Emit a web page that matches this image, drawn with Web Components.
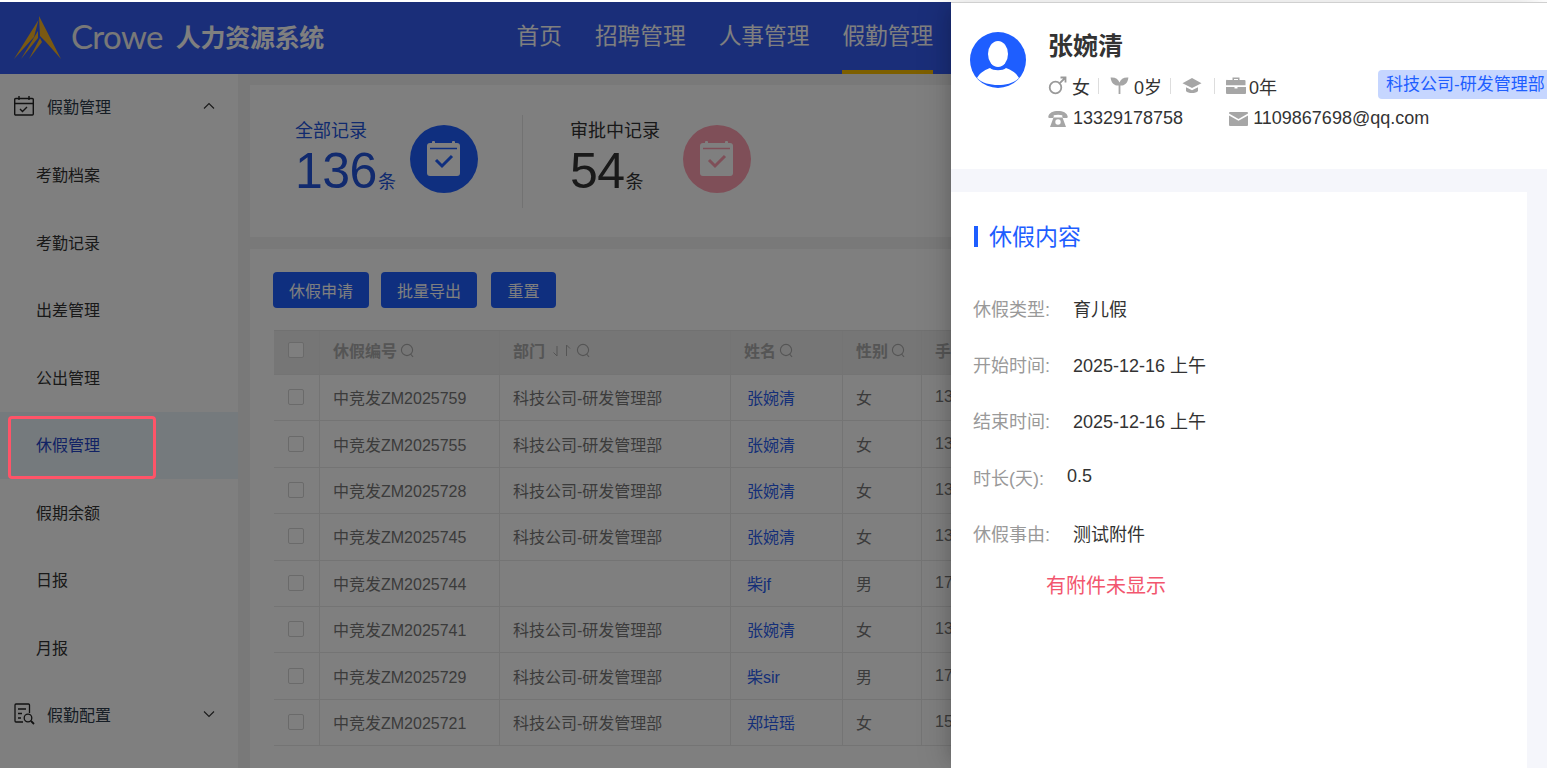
<!doctype html>
<html lang="zh">
<head>
<meta charset="utf-8">
<title>人力资源系统</title>
<style>
  html, body { margin: 0; height: 100%; overflow: hidden; background: #fff; }
  body { font-family: 'Liberation Sans', 'Noto Sans CJK SC', sans-serif; color: #333; }
</style>
</head>
<body>
<hr-app></hr-app>
<script>
const BLUE = '#1e5eff'

const icons = {
  calendar: `<svg width="22" height="22" viewBox="0 0 22 22" fill="none" stroke="currentColor" stroke-width="1.4"><rect x=".7" y="3.500" width="18.600" height="16.500" rx="1"/><path d="M.7 8.500h18.600M5 1v4M15 1v4"/><path d="M6 14l2.500 2.500 4.500-4.500"/></svg>`,
  docSearch: `<svg width="24" height="22" viewBox="0 0 24 22" fill="none" stroke="currentColor" stroke-width="1.3"><path d="M15.500 10V2a1 1 0 0 0-1-1H2a1 1 0 0 0-1 1v16a1 1 0 0 0 1 1h7"/><path d="M4 6h8M4 10.500h4M4 15h3"/><circle cx="14" cy="15" r="3.800"/><path d="M17 18l3 3" stroke-width="1.800"/></svg>`,
  up: `<svg width="12" height="8" viewBox="0 0 12 8" fill="none" stroke="currentColor" stroke-width="1.100"><path d="M1 6.500l5-5 5 5"/></svg>`,
  down: `<svg width="12" height="8" viewBox="0 0 12 8" fill="none" stroke="currentColor" stroke-width="1.100"><path d="M1 1.500l5 5 5-5"/></svg>`,
  search: `<svg class="q" width="15" height="15" viewBox="0 0 15 15" fill="none" stroke="currentColor" stroke-width="1.100"><circle cx="7" cy="7" r="5.600"/><path d="M10.500 11l2.500 2.800"/></svg>`,
  sort: `<svg class="s" width="22" height="15" viewBox="0 0 22 15" fill="none" stroke="currentColor" stroke-width="1"><path d="M7 3v10L3.500 9.500M16.500 13V2L20 5.500"/></svg>`,
  male: `<svg width="19" height="19" viewBox="0 0 19 19" fill="none" stroke="#999" stroke-width="1.800"><circle cx="7.500" cy="11.500" r="5.800"/><path d="M11.800 7.200L17.500 1.500M12.500 1.500h5v5"/></svg>`,
  sprout: `<svg class="sprout" width="19" height="19" viewBox="0 0 19 19" fill="#a6a6a6"><path d="M8.600 18V9.500C5 9.700 1.200 8 .6 1.500 5 1 8.400 3 9.500 6.500 10.600 3 14 1 18.400 1.500 17.800 8 14 9.700 10.400 9.500V18z"/></svg>`,
  cap: `<svg class="cap" width="20" height="18" viewBox="0 0 20 18" fill="#a6a6a6"><path d="M10 1l9.500 5.200L10 11 .5 6.200z"/><path d="M4 10.200V14c2 2.700 10 2.700 12 0v-3.800L10 13.300z"/></svg>`,
  briefcase: `<svg class="case" width="20" height="19" viewBox="0 0 20 19" fill="#a6a6a6"><path d="M6.500 4V1.500h7V4h-1.500V3h-4v1z"/><path d="M1.500 4h17a1 1 0 0 1 1 1v4.300H0V5a1 1 0 0 1 1.500-1zM0 11h8.500v1.500h3V11H20v6a1 1 0 0 1-1 1H1a1 1 0 0 1-1-1z"/></svg>`,
  phone: `<svg width="20" height="18" viewBox="0 0 20 18" fill="#a6a6a6"><path d="M.3 6.500C1 2.800 5 1 10 1s9 1.800 9.700 5.500c.1 1-.5 1.500-1.300 1.500h-2.800c-.8 0-1.300-.5-1.300-1.300V5.300c-2.500-.7-6-.7-8.600 0v1.400c0 .8-.5 1.300-1.300 1.300H1.600C.8 8 .2 7.500.3 6.500z"/><path fill-rule="evenodd" d="M5.500 7.500h9L18 17H2zM10 9.300a2.700 2.700 0 1 0 0 5.400 2.700 2.700 0 0 0 0-5.400z"/></svg>`,
  mail: `<svg width="19" height="14" viewBox="0 0 19 15" preserveAspectRatio="none" fill="#a6a6a6"><path d="M1 0h17a1 1 0 0 1 1 1v.6l-9.500 5.800L0 1.600V1a1 1 0 0 1 1-1z"/><path d="M0 3.700l9.500 5.800L19 3.700V14a1 1 0 0 1-1 1H1a1 1 0 0 1-1-1z"/></svg>`,
}

// tiny helper so each element only declares its own styles and markup
const defineElement = (tag, html, setup) => {
  customElements.define(tag, class extends HTMLElement {
    connectedCallback() {
      if (this.shadowRoot) return
      const root = this.attachShadow({ mode: 'open' })
      root.innerHTML = typeof html === 'function' ? html(this) : html
      if (setup) setup(root, this)
    }
  })
}

defineElement('hr-header', `
  <style>
    :host { display: flex; align-items: stretch; height: 72px; margin-top: 2px; background: #345df2; color: #fff; }
    .logo { display: flex; align-items: center; width: 516.500px; padding: 0 0 4px 14px; box-sizing: border-box; flex: none; }
    .logo svg { margin-top: 4px; }
    .crowe { font: 400 33px Lato, sans-serif; letter-spacing: -.6px; margin-left: 9px; color: #f0f0f0; }
    .system { font-size: 25px; font-weight: 700; margin-left: 13px; letter-spacing: -.3px; color: #fff; }
    nav { display: flex; gap: 33px; }
    a { display: flex; align-items: center; font-size: 22.700px; height: 72px; box-sizing: border-box; border-bottom: 4px solid transparent; padding-bottom: 3px; color: #fff; white-space: nowrap; }
    a.on { border-bottom-color: #fabe00; }
  </style>
  <div class="logo">
    <svg width="48" height="44" viewBox="0 0 48 44"><g fill="#f5b325"><path d="M25 0L47 43 31.500 25.500 26 20z"/><path d="M24.500 4L0 43 20 21z"/><path d="M24 15L7 43 24 22z"/><path d="M26 22L15 43 28 26z"/></g></svg>
    <span class="crowe">Crowe</span><span class="system">人力资源系统</span>
  </div>
  <nav><a>首页</a><a>招聘管理</a><a>人事管理</a><a class="on">假勤管理</a></nav>
`)

defineElement('hr-menu-group', (el) => `
  <style>
    :host { display: flex; align-items: center; height: 67.500px; box-sizing: border-box; padding: 0 23px 3px 14px; font-size: 16px; color: #333; }
    .icon { width: 22px; height: 22px; margin-right: 11px; color: #222; }
    .label { flex: 1; color: #2d3a4a; }
    .chev { color: #333; display: flex; }
  </style>
  <span class="icon">${icons[el.getAttribute('icon')]}</span>
  <span class="label"><slot></slot></span>
  <span class="chev">${icons[el.getAttribute('chevron')]}</span>
`)

defineElement('hr-menu-item', `
  <style>
    :host { display: flex; align-items: center; height: 67.500px; box-sizing: border-box; padding: 0 0 2px 36px; font-size: 16px; color: #333; }
    :host([active]) { background: #ebf5fb; color: #2444c8; }
  </style>
  <slot></slot>
`)

defineElement('hr-side-menu', `
  <style>
    :host { display: block; width: 238px; flex: none; background: #fff; overflow: hidden; }
  </style>
  <hr-menu-group icon="calendar" chevron="up">假勤管理</hr-menu-group>
  <hr-menu-item>考勤档案</hr-menu-item>
  <hr-menu-item>考勤记录</hr-menu-item>
  <hr-menu-item>出差管理</hr-menu-item>
  <hr-menu-item>公出管理</hr-menu-item>
  <hr-menu-item active>休假管理</hr-menu-item>
  <hr-menu-item>假期余额</hr-menu-item>
  <hr-menu-item>日报</hr-menu-item>
  <hr-menu-item>月报</hr-menu-item>
  <hr-menu-group icon="docSearch" chevron="down">假勤配置</hr-menu-group>
`)

defineElement('hr-stat', (el) => `
  <style>
    :host { display: flex; align-items: center; color: ${el.getAttribute('color')}; }
    .text { display: flex; flex-direction: column; padding-bottom: 4px; }
    .title { font-size: 18px; line-height: 20px; margin-bottom: 4px; }
    .value { display: flex; align-items: baseline; height: 52px; line-height: 52px; font-size: 50px; letter-spacing: -.5px; }
    small { font-size: 18px; letter-spacing: 0; margin-left: 1px; }
    svg { flex: none; margin-left: ${el.getAttribute('gap')}px; margin-bottom: 4px; }
  </style>
  <div class="text">
    <span class="title">${el.getAttribute('title')}</span>
    <span class="value">${el.getAttribute('value')}<small>条</small></span>
  </div>
  <svg width="68" height="68" viewBox="0 0 68 68">
    <circle cx="34" cy="34" r="34" fill="${el.getAttribute('tone')}"/>
    <rect x="17" y="18" width="33" height="33" rx="3" fill="#fff"/>
    <rect x="22" y="16" width="3" height="4" rx="1" fill="#fff"/><rect x="42" y="16" width="3" height="4" rx="1" fill="#fff"/>
    <path d="M20 23.500h27" stroke="${el.getAttribute('tone')}" stroke-width="1.500"/>
    <path d="M26 35l6 6 10-10" fill="none" stroke="${el.getAttribute('tone')}" stroke-width="3"/>
  </svg>
`)

defineElement('hr-button', `
  <style>
    :host { display: inline-flex; align-items: center; justify-content: center; height: 36px; padding: 0 var(--pad, 16px); background: ${BLUE}; color: #fff; font-size: 16px; border-radius: 4px; }
  </style>
  <slot></slot>
`)

const rows = [
  ['中竞发ZM2025759', '科技公司-研发管理部', '张婉清', '女', '13'],
  ['中竞发ZM2025755', '科技公司-研发管理部', '张婉清', '女', '13'],
  ['中竞发ZM2025728', '科技公司-研发管理部', '张婉清', '女', '13'],
  ['中竞发ZM2025745', '科技公司-研发管理部', '张婉清', '女', '13'],
  ['中竞发ZM2025744', '', '柴jf', '男', '17'],
  ['中竞发ZM2025741', '科技公司-研发管理部', '张婉清', '女', '13'],
  ['中竞发ZM2025729', '科技公司-研发管理部', '柴sir', '男', '17'],
  ['中竞发ZM2025721', '科技公司-研发管理部', '郑培瑶', '女', '15'],
]

defineElement('hr-leave-table', `
  <style>
    :host { display: block; font-size: 16px; color: #777; }
    .row { display: grid; grid-template-columns: 46px 180px 231px 112px 79px 60px; height: 46.400px; box-sizing: border-box; border-bottom: 1px solid #e8e8e8; }
    .row > div { display: flex; align-items: center; padding: 0 0 1px 13px; border-right: 1px solid #e8e8e8; white-space: nowrap; overflow: hidden; }
    .row > div:first-child { padding-left: 14px; }
    .row > div:last-child { border-right: 0; padding-right: 0; }
    .head { height: 45px; background: #ececec; color: #aaa; font-weight: 700; border-top: 1px solid #e2e2e2; }
    .head > div { padding-bottom: 5px; }
    i { display: block; width: 16px; height: 16px; box-sizing: border-box; border: 1px solid #d4d4d4; border-radius: 2px; background: #fff; }
    .head svg { flex: none; color: #aaa; }
    .q { margin-left: 3px; }
    .s + .q { margin-left: 4px; }
    .s { margin-left: 5px; }
    .name { color: #2a5ef0; padding-left: 3px; }
  </style>
  <div class="row head">
    <div><i></i></div>
    <div>休假编号${icons.search}</div>
    <div>部门${icons.sort}${icons.search}</div>
    <div>姓名${icons.search}</div>
    <div>性别${icons.search}</div>
    <div>手</div>
  </div>
  <div id="body"></div>
`, (root) => {
  root.getElementById('body').innerHTML = rows.map((r) => `
    <div class="row">
      <div><i></i></div>
      <div>${r[0]}</div>
      <div>${r[1]}</div>
      <div><span class="name">${r[2]}</span></div>
      <div>${r[3]}</div>
      <div>${r[4]}</div>
    </div>`).join('')
})

defineElement('hr-leave-page', `
  <style>
    :host { display: flex; flex-direction: column; gap: 12px; flex: 1; min-width: 0; padding: 11px 0 0 12px; background: #f2f2f2; overflow: hidden; }
    .stats { display: flex; align-items: center; flex: none; height: 152px; background: #fff; padding-left: 45px; box-sizing: border-box; }
    .divider { width: 1px; height: 93px; background: #e4e4e4; margin: 1px 47px 0 44px; }
    .list { flex: 1; background: #fff; padding: 23px 0 0 24px; }
    .tools { display: flex; margin: 0 0 22px -1px; }
    hr-button + hr-button { margin-left: 12px; }
    hr-button:last-child { margin-left: 14px; --pad: 16.500px; }
  </style>
  <section class="stats">
    <hr-stat title="全部记录" value="136" color="#2255dd" tone="${BLUE}" gap="14"></hr-stat>
    <span class="divider"></span>
    <hr-stat title="审批中记录" value="54" color="#333" tone="#ff9eb0" gap="23"></hr-stat>
  </section>
  <section class="list">
    <div class="tools">
      <hr-button>休假申请</hr-button>
      <hr-button>批量导出</hr-button>
      <hr-button>重置</hr-button>
    </div>
    <hr-leave-table></hr-leave-table>
  </section>
`)

defineElement('hr-field', (el) => `
  <style>
    :host { display: flex; align-items: center; height: 56.200px; font-size: 18px; color: #333; }
    span { color: #999; margin-right: 23px; }
  </style>
  <span>${el.getAttribute('label')}</span><slot></slot>
`)

defineElement('hr-detail-drawer', `
  <style>
    :host { display: flex; flex-direction: column; position: absolute; top: 2px; right: 0; bottom: 0; left: 951px; background: #f5f6fb; border-top: 1px solid #d0d0d0; box-sizing: border-box; overflow: hidden; font-size: 18px; color: #333; box-shadow: -6px 0 16px -8px rgba(0, 0, 0, .2), -9px 0 28px rgba(0, 0, 0, .1); }
    .profile { display: flex; flex: none; height: 166px; background: #fff; padding: 29px 0 0 19px; box-sizing: border-box; }
    .avatar { flex: none; margin-right: 22px; }
    .info { flex: 1; min-width: 0; }
    h2 { margin: 0 0 8px; font-size: 25px; line-height: 29px; font-weight: 700; color: #333; }
    .line { display: flex; align-items: center; height: 33px; white-space: nowrap; }
    .line svg { flex: none; margin-right: 5px; }
    .line .cap { margin-right: 4px; }
    .line .case { margin-right: 3px; }
    .sep { width: 1px; height: 16px; background: #ddd; margin: 0 11px 0 8px; }
    .tag { margin: 0 0 2px auto; height: 29px; line-height: 29px; width: 169px; box-sizing: border-box; padding-left: 8px; background: #c6d6ff; color: ${BLUE}; border-radius: 4px 0 0 4px; font-size: 17px; }
    .contact { margin-right: 46px; }
    .content { flex: 1; background: #fff; margin: 23px 20px 0 0; padding: 34px 0 0 22px; }
    h3 { display: flex; align-items: center; margin: 0 0 33px 1px; font-size: 23px; line-height: 20px; font-weight: 400; color: ${BLUE}; }
    h3::before { content: ''; width: 4px; height: 21px; background: ${BLUE}; margin-right: 11px; }
    .note { margin: 9px 0 0 73px; font-size: 20px; color: #f2566e; }
  </style>
  <header class="profile">
    <svg class="avatar" width="56" height="56" viewBox="0 0 56 56">
      <circle cx="28" cy="28" r="28" fill="${BLUE}"/>
      <ellipse cx="28" cy="22" rx="10" ry="13" fill="#fff"/>
      <path d="M7 46c3-6 10-9 13-10 3 3 13 3 16 0 3 1 10 4 13 10-5 5-13 7-21 7S12 51 7 46z" fill="#fff"/>
    </svg>
    <div class="info">
      <h2>张婉清</h2>
      <div class="line">
        ${icons.male}女<span class="sep"></span>${icons.sprout}0岁<span class="sep"></span>${icons.cap}<span class="sep"></span>${icons.briefcase}0年
        <span class="tag">科技公司-研发管理部</span>
      </div>
      <div class="line">
        ${icons.phone}<span class="contact">13329178758</span>${icons.mail}1109867698@qq.com
      </div>
    </div>
  </header>
  <section class="content">
    <h3>休假内容</h3>
    <hr-field label="休假类型:">育儿假</hr-field>
    <hr-field label="开始时间:">2025-12-16 上午</hr-field>
    <hr-field label="结束时间:">2025-12-16 上午</hr-field>
    <hr-field label="时长(天):">0.5</hr-field>
    <hr-field label="休假事由:">测试附件</hr-field>
    <p class="note">有附件未显示</p>
  </section>
`)

defineElement('hr-app', `
  <style>
    :host { display: flex; flex-direction: column; position: relative; height: 768px; overflow: hidden; }
    .body { display: flex; flex: 1; min-height: 0; }
    .mask { position: absolute; inset: 2px 0 0 0; background: rgba(0, 0, 0, .5); }
    .mark { position: absolute; left: 8px; top: 416px; width: 148px; height: 63px; box-sizing: border-box; border: 3px solid #ff5468; border-radius: 4px; }
  </style>
  <hr-header></hr-header>
  <div class="body">
    <hr-side-menu></hr-side-menu>
    <hr-leave-page></hr-leave-page>
  </div>
  <div class="mask"></div>
  <span class="mark"></span>
  <hr-detail-drawer></hr-detail-drawer>
`)
</script>
</body>
</html>
